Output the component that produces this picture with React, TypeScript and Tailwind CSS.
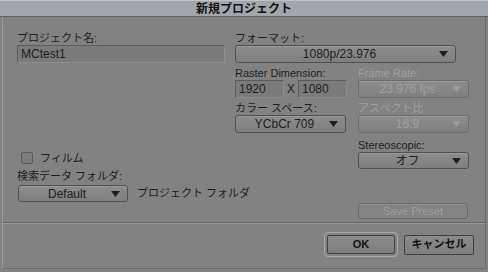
import React from "react";

const font = { fontFamily: '"Liberation Sans", "Noto Sans CJK JP", sans-serif' };

function Arrow({ disabled }: { disabled?: boolean }) {
  return (
    <svg width="9" height="6" viewBox="0 0 9 6" className="absolute right-[7px] top-1/2 -translate-y-1/2">
      <path d="M0 0H9L4.5 6Z" fill={disabled ? "#9c9c9c" : "#1e1e1e"} />
    </svg>
  );
}

function Select({ value, w, h = "h-[18px]", disabled }: { value: string; w: string; h?: string; disabled?: boolean }) {
  return (
    <div
      className={`relative shrink-0 ${w} ${h} flex items-center justify-center rounded-[3px] border ${
        disabled ? "border-[#6c6c6c] text-[#a0a0a0]" : "border-[#505050] text-[#1c1c1c]"
      } bg-gradient-to-b from-[#8d8d8d] to-[#7f7f7f] shadow-[inset_0_1px_0_#9a9a9a] text-[12px] pr-3`}
    >
      {value}
      <Arrow disabled={disabled} />
    </div>
  );
}

function Field({ value, w }: { value: string; w: string }) {
  return (
    <div className={`${w} shrink-0 h-[18px] flex items-center pl-[3px] border border-[#5c5c5c] border-b-[#8e8e8e] border-r-[#8e8e8e] bg-[#7b7b7b] text-[12px] text-[#1c1c1c]`}>
      {value}
    </div>
  );
}

function Label({ children, disabled, className = "" }: { children: React.ReactNode; disabled?: boolean; className?: string }) {
  return (
    <div className={`h-[14px] leading-[14px] text-[11px] whitespace-nowrap ${disabled ? "text-[#a0a0a0]" : "text-[#1c1c1c]"} ${className}`}>
      {children}
    </div>
  );
}

export default function App() {
  return (
    <div style={font} className="w-[488px] h-[272px] bg-[#828282] flex flex-col overflow-hidden">
      <div className="h-[17px] shrink-0 bg-[#a3a6ad] border-b border-[#5e6066] border-t border-t-[#c0c2c8] flex items-center justify-center text-[12px] font-bold text-[#111]">
        新規プロジェクト
      </div>
      <div className="flex-1 mx-[2px] mb-[3px] border-l border-r border-b border-l-[#9c9c9c] border-r-[#6a6a6a] border-b-[#6a6a6a] flex flex-col">
        <div className="flex pt-[14px]">
          <div className="ml-[14px] w-[208px] shrink-0 flex flex-col">
            <Label>プロジェクト名:</Label>
            <Field value="MCtest1" w="w-[208px]" />
            <div className="mt-[89px] flex items-center gap-[7px] ml-[4px] h-[12px]">
              <div className="w-[12px] h-[12px] rounded-[2px] border border-[#5a5a5a] bg-[#7d7d7d]" />
              <span className="text-[11px] text-[#1c1c1c]">フィルム</span>
            </div>
            <Label className="mt-[5px]">検索データ フォルダ:</Label>
            <div className="flex items-center mt-[2px] ml-[1px]">
              <Select value="Default" w="w-[110px]" h="h-[17px]" />
              <span className="ml-[9px] text-[11px] text-[#1c1c1c] whitespace-nowrap">プロジェクト フォルダ</span>
            </div>
          </div>
          <div className="ml-[10px] flex flex-col">
            <Label>フォーマット:</Label>
            <Select value="1080p/23.976" w="w-[221px]" />
            <div className="flex mt-[3px] gap-[11px]">
              <div className="flex flex-col">
                <Label>Raster Dimension:</Label>
                <div className="flex items-center">
                  <Field value="1920" w="w-[49px]" />
                  <span className="w-[14px] text-center text-[12px] text-[#1c1c1c]">X</span>
                  <Field value="1080" w="w-[49px]" />
                </div>
              </div>
              <div className="flex flex-col">
                <Label disabled>Frame Rate:</Label>
                <Select value="23.976 fps" w="w-[111px]" disabled />
              </div>
            </div>
            <div className="flex mt-[3px] gap-[12px]">
              <div className="flex flex-col">
                <Label>カラー スペース:</Label>
                <Select value="YCbCr 709" w="w-[111px]" />
              </div>
              <div className="flex flex-col">
                <Label disabled>アスペクト比</Label>
                <Select value="16:9" w="w-[111px]" disabled />
              </div>
            </div>
            <div className="ml-[123px] mt-[5px] flex flex-col">
              <Label>Stereoscopic:</Label>
              <Select value="オフ" w="w-[111px]" h="h-[17px]" />
              <div className="mt-[34px] w-[110px] h-[16px] rounded-[3px] border border-[#6a6a6a] shadow-[inset_0_1px_0_#909090] bg-[#838383] flex items-center justify-center text-[11px] text-[#a0a0a0]">
                Save Preset
              </div>
            </div>
          </div>
        </div>
        <div className="mt-[3px] h-[2px] border-t border-[#666] border-b border-b-[#969696]" />
        <div className="flex justify-end items-center gap-[6px] pr-[11px] pt-[8px]">
          <div className="rounded-[4px] border border-[#a9a9a9] p-[2px]">
            <div className="w-[68px] h-[19px] rounded-[2px] border border-[#3f3f3f] bg-gradient-to-b from-[#8c8c8c] to-[#7e7e7e] flex items-center justify-center text-[11px] font-bold text-[#111]">
              OK
            </div>
          </div>
          <div className="w-[70px] h-[20px] rounded-[2px] border border-[#3f3f3f] bg-gradient-to-b from-[#8c8c8c] to-[#7e7e7e] flex items-center justify-center text-[11px] font-bold text-[#111]">
            キャンセル
          </div>
        </div>
      </div>
    </div>
  );
}
